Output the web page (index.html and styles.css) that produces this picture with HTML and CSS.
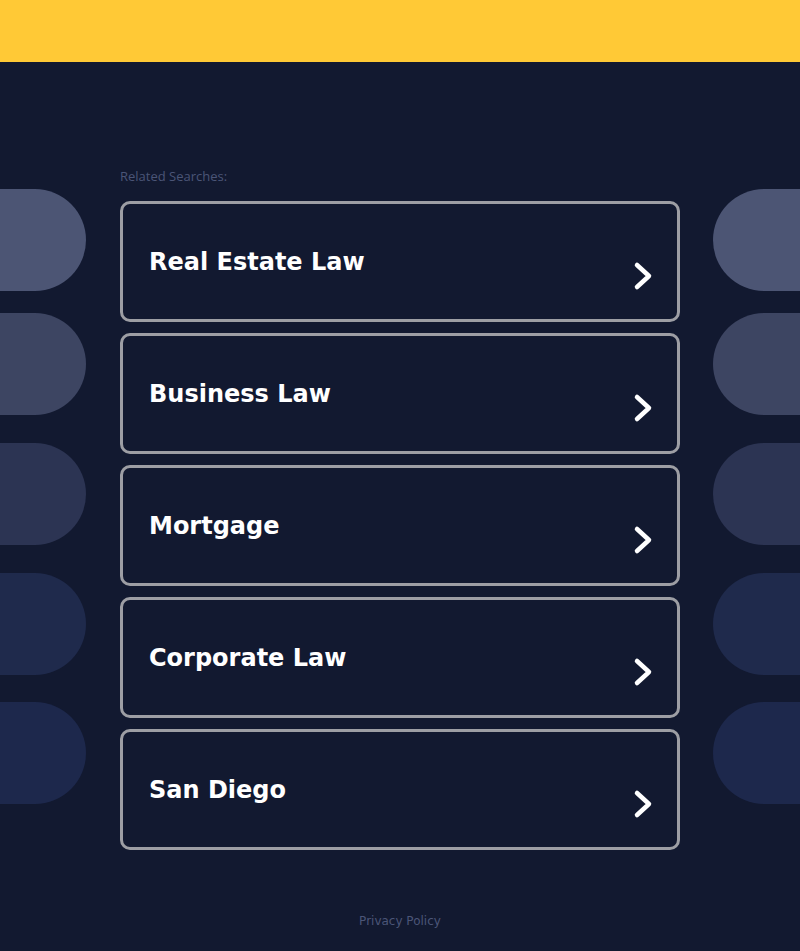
FILE: index.html
```html
<!DOCTYPE html>
<html lang="en">
<head>
    <meta charset="UTF-8">
    <meta name="viewport" content="width=device-width, initial-scale=1.0">
    <title>Related Searches</title>
    <link rel="stylesheet" href="styles.css">
</head>
<body>

    <div class="topbar"></div>

    <div class="stage">
        <div class="side side-left">
            <div class="pill p1"></div>
            <div class="pill p2"></div>
            <div class="pill p3"></div>
            <div class="pill p4"></div>
            <div class="pill p5"></div>
        </div>

        <div class="main">
            <p class="label">Related Searches:</p>
            <a class="card" href="#"><span class="card-title">Real Estate Law</span><svg class="chev" width="22" height="30" viewBox="0 0 22 30"><polyline points="4,4 16,15 4,26" fill="none" stroke="#fff" stroke-width="4.5" stroke-linecap="round" stroke-linejoin="round"/></svg></a>
            <a class="card" href="#"><span class="card-title">Business Law</span><svg class="chev" width="22" height="30" viewBox="0 0 22 30"><polyline points="4,4 16,15 4,26" fill="none" stroke="#fff" stroke-width="4.5" stroke-linecap="round" stroke-linejoin="round"/></svg></a>
            <a class="card" href="#"><span class="card-title">Mortgage</span><svg class="chev" width="22" height="30" viewBox="0 0 22 30"><polyline points="4,4 16,15 4,26" fill="none" stroke="#fff" stroke-width="4.5" stroke-linecap="round" stroke-linejoin="round"/></svg></a>
            <a class="card" href="#"><span class="card-title">Corporate Law</span><svg class="chev" width="22" height="30" viewBox="0 0 22 30"><polyline points="4,4 16,15 4,26" fill="none" stroke="#fff" stroke-width="4.5" stroke-linecap="round" stroke-linejoin="round"/></svg></a>
            <a class="card" href="#"><span class="card-title">San Diego</span><svg class="chev" width="22" height="30" viewBox="0 0 22 30"><polyline points="4,4 16,15 4,26" fill="none" stroke="#fff" stroke-width="4.5" stroke-linecap="round" stroke-linejoin="round"/></svg></a>
        </div>

        <div class="side side-right">
            <div class="pill p1"></div>
            <div class="pill p2"></div>
            <div class="pill p3"></div>
            <div class="pill p4"></div>
            <div class="pill p5"></div>
        </div>
    </div>

    <div class="footer">
        <a href="#">Privacy Policy</a>
    </div>

</body>
</html>
```

FILE: styles.css
```css
body {
    margin: 0;
    background-color: #121930;
    font-family: "DejaVu Sans", Verdana, sans-serif;
    overflow-x: hidden;
}
.topbar {
    height: 62px;
    background: #ffc936;
}
.stage {
    display: flex;
    margin-top: 106px;
}
.side {
    display: flex;
    flex-direction: column;
    padding-top: 21px;
    overflow: hidden;
}
.side-left {
    width: 86px;
    align-items: flex-end;
    flex-shrink: 0;
}
.side-right {
    flex: 1;
    margin-left: 33px;
}
.pill {
    width: 140px;
    height: 102px;
    flex-shrink: 0;
}
.side-left .pill {
    border-radius: 0 51px 51px 0;
}
.side-right .pill {
    border-radius: 51px 0 0 51px;
}
.pill.p2 { margin-top: 22px; }
.pill.p3 { margin-top: 28px; }
.pill.p4 { margin-top: 28px; }
.pill.p5 { margin-top: 27px; }
.p1 { background: #4c5574; }
.p2 { background: #3d4562; }
.p3 { background: #2c3453; }
.p4 { background: #1f2a4c; }
.p5 { background: #1d284c; }

.main {
    width: 560px;
    margin-left: 34px;
    flex-shrink: 0;
}
.label {
    margin: 0 0 17px;
    font-family: "Open Sans", sans-serif;
    font-size: 13px;
    line-height: 16px;
    color: #4b5577;
}
.card {
    display: flex;
    justify-content: space-between;
    align-items: flex-start;
    box-sizing: border-box;
    height: 121px;
    margin-bottom: 11px;
    padding: 44px 22px 0 26px;
    border: 3px solid #9d9ea4;
    border-radius: 10px;
    text-decoration: none;
}
.card-title {
    font-weight: bold;
    font-size: 24px;
    line-height: 28px;
    color: #fff;
}
.chev {
    margin-top: 13px;
}
.footer {
    text-align: center;
    margin-top: 49px;
    padding-bottom: 20px;
}
.footer a {
    font-size: 12px;
    color: #4b5577;
    text-decoration: none;
}
```
